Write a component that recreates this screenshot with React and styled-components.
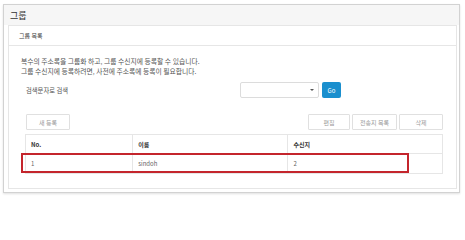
import React from 'react';
import styled, { createGlobalStyle } from 'styled-components';

const GlobalStyle = createGlobalStyle`
  body {
    margin: 0;
    background: #fff;
    font-family: "Noto Sans CJK KR", "Noto Sans", sans-serif;
  }
`;

const Page = styled.div`
  width: 465px;
  height: 200px;
  padding: 4px 5px 0 3px;
  box-sizing: border-box;
`;

const OuterPanel = styled.div`
  height: 189px;
  box-sizing: border-box;
  border: 1px solid #d2d2d2;
  box-shadow: 0 1px 2px rgba(0, 0, 0, 0.12);
  background: #fff;
  display: flex;
  flex-direction: column;
`;

const OuterHeader = styled.div`
  height: 20px;
  background: #f6f6f6;
  display: flex;
  align-items: center;
  padding-left: 6px;
  font-size: 9px;
  color: #333;
`;

const OuterBody = styled.div`
  flex: 1;
  padding: 0 3px 3px 4px;
  display: flex;
`;

const InnerPanel = styled.div`
  flex: 1;
  border: 1px solid #e6e6e6;
  display: flex;
  flex-direction: column;
`;

const InnerHeader = styled.div`
  height: 19px;
  border-bottom: 1px solid #e6e6e6;
  display: flex;
  align-items: center;
  padding-left: 10px;
  font-size: 6px;
  color: #444;
`;

const Content = styled.div`
  padding: 10px 13px 0 12px;
  display: flex;
  flex-direction: column;
`;

const Desc = styled.p`
  margin: 0;
  font-size: 6.8px;
  line-height: 10px;
  color: #555;
`;

const SearchRow = styled.div`
  display: flex;
  align-items: center;
  height: 16px;
  margin-top: 6px;
  padding-left: 5px;
`;

const Label = styled.span`
  font-size: 6.3px;
  color: #555;
  width: 214px;
`;

const Select = styled.div`
  width: 79px;
  height: 16px;
  box-sizing: border-box;
  border: 1px solid #dcdcdc;
  border-radius: 2px;
  display: flex;
  align-items: center;
  justify-content: flex-end;
  padding-right: 4px;
`;

const Caret = styled.span`
  width: 0;
  height: 0;
  border-left: 2px solid transparent;
  border-right: 2px solid transparent;
  border-top: 2px solid #555;
`;

const GoButton = styled.button`
  margin-left: 3px;
  width: 19px;
  height: 16px;
  padding: 0;
  border: none;
  border-radius: 2px;
  background: #1a8fce;
  color: #fff;
  font-family: inherit;
  font-size: 6px;
`;

const ButtonRow = styled.div`
  display: flex;
  align-items: center;
  margin-top: 16px;
  padding-left: 5px;
  gap: 2px;
`;

const Btn = styled.button`
  width: ${p => p.w}px;
  height: 16px;
  padding: 0;
  box-sizing: border-box;
  border: 1px solid #e0e0e0;
  border-radius: 1px;
  background: #fff;
  color: #999;
  font-family: inherit;
  font-size: 6px;
  margin-left: ${p => (p.push ? 'auto' : '0')};
`;

const TableWrap = styled.div`
  position: relative;
  margin-top: 4px;
  margin-left: 4px;
`;

const Table = styled.table`
  width: 418px;
  border-collapse: collapse;
  font-size: 6px;
`;

const Th = styled.th`
  height: 18px;
  padding: 0 0 0 5px;
  border: 1px solid #e6e6e6;
  text-align: left;
  font-weight: bold;
  color: #333;
  width: ${p => p.w}px;
`;

const Td = styled.td`
  height: 19px;
  padding: 0 0 0 5px;
  border: 1px solid #e6e6e6;
  color: #666;
`;

const Highlight = styled.div`
  position: absolute;
  left: -4px;
  top: 19px;
  width: 388px;
  height: 20px;
  box-sizing: border-box;
  border: 2px solid #c4252c;
`;

export default function App() {
  return (
    <>
      <GlobalStyle />
      <Page>
        <OuterPanel>
          <OuterHeader>그룹</OuterHeader>
          <OuterBody>
            <InnerPanel>
              <InnerHeader>그룹 목록</InnerHeader>
              <Content>
                <Desc>복수의 주소록을 그룹화 하고, 그룹 수신지에 등록할 수 있습니다.</Desc>
                <Desc>그룹 수신지에 등록하려면, 사전에 주소록에 등록이 필요합니다.</Desc>
                <SearchRow>
                  <Label>검색문자로 검색</Label>
                  <Select>
                    <Caret />
                  </Select>
                  <GoButton>Go</GoButton>
                </SearchRow>
                <ButtonRow>
                  <Btn w={44}>새 등록</Btn>
                  <Btn w={42} push>편집</Btn>
                  <Btn w={45}>전송지 목록</Btn>
                  <Btn w={44}>삭제</Btn>
                </ButtonRow>
                <TableWrap>
                  <Table>
                    <thead>
                      <tr>
                        <Th w={106}>No.</Th>
                        <Th w={156}>이름</Th>
                        <Th w={156}>수신지</Th>
                      </tr>
                    </thead>
                    <tbody>
                      <tr>
                        <Td>1</Td>
                        <Td>sindoh</Td>
                        <Td>2</Td>
                      </tr>
                    </tbody>
                  </Table>
                  <Highlight />
                </TableWrap>
              </Content>
            </InnerPanel>
          </OuterBody>
        </OuterPanel>
      </Page>
    </>
  );
}
